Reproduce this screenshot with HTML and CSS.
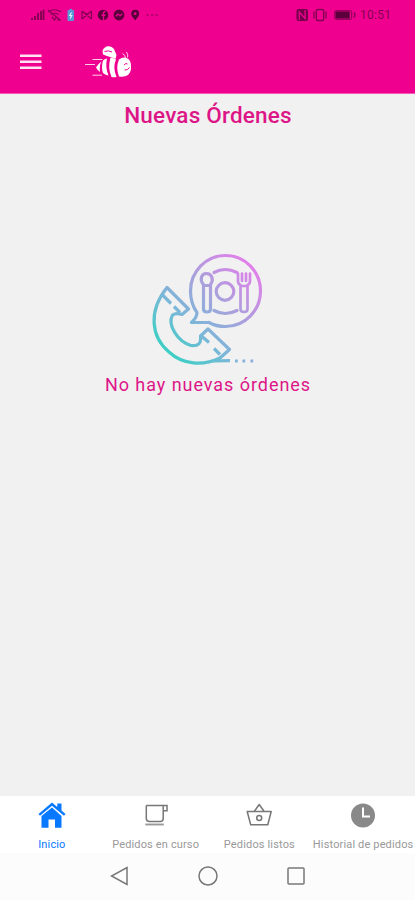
FILE: index.html
```html
<!DOCTYPE html>
<html lang="es">
<head>
<meta charset="utf-8">
<meta name="viewport" content="width=device-width, initial-scale=1">
<title>Nuevas Órdenes</title>
<link rel="stylesheet" href="styles.css">
</head>
<body>
<div class="screen">
  <header class="header">
    <div class="status">
      <svg class="status-left" width="130" height="16" viewBox="30 7 130 16" fill="none" stroke="#850052" stroke-width="1.2">
        <path d="M32 20v-2M35 20v-4M38 20v-7M41 20v-9M43.500 20V9.500" stroke-width="1.900"/>
        <path d="M48 12q6-4.500 13 0M50.500 14.500q4-2.500 8 0M48 10l12 10M52 17l2.500 3 2-3M57 20h4"/>
        <rect x="67.500" y="10" width="6.500" height="11" rx="1" fill="#5798d5" stroke="none"/>
        <path d="M69.500 9.500h2.500" stroke="#5798d5"/>
        <path d="M71.500 12.500l-1.800 3h2l-1.500 3" stroke="#d7f3ff"/>
        <path d="M82 11l9.500 8M91.500 11l-9.500 8M82 11v8M91.500 11v8M84 12.500q3 3 5.500 0"/>
        <circle cx="103" cy="15" r="5.300" fill="#5b003d" stroke="none"/>
        <path d="M103.500 20.500v-7q0-2 2-2M101.500 15.200h4" stroke="#ee008e" stroke-width="1.400"/>
        <circle cx="119" cy="15" r="5.400" fill="#5b003d" stroke="none"/>
        <path d="M115.800 16.300l2.200-2.200 2 1.600 2.400-1.900" stroke="#ee008e" stroke-width="1.300"/>
        <path d="M135.200 20.500c-1-2-4-4-4-6.800a4 4 0 0 1 8 0c0 2.800-3 4.800-4 6.800z" fill="#5b003d" stroke="none"/>
        <circle cx="135.200" cy="13.700" r="1.400" fill="#ee008e" stroke="none"/>
        <path d="M146.500 15h2.500M151 15h2.500M155.500 15h2.500"/>
      </svg>
      <svg class="status-right" width="62" height="16" viewBox="295 7 62 16" fill="none" stroke="#850052">
        <rect x="296.500" y="9" width="11.500" height="12" rx="2" fill="#75004a" stroke="none"/>
        <path d="M299.300 20v-8l5.800 6.500V10" stroke="#ee008e" stroke-width="1.300"/>
        <rect x="316.300" y="9.500" width="7.400" height="11" rx="1.500" stroke-width="1.400"/>
        <path d="M314 11.500v7M326 11.500v7" stroke-width="1.300"/>
        <rect x="334.700" y="10.700" width="17" height="8.600" rx="1.500" stroke-width="1"/>
        <rect x="335.500" y="11.500" width="14.200" height="7" fill="#5b003d" stroke="none"/>
        <path d="M354 12.500q2 2.500 0 5" stroke-width="1.300"/>
      </svg>
      <span class="time">10:51</span>
    </div>
    <div class="appbar">
      <svg class="menu" width="22" height="16" viewBox="0 0 22 16" fill="#ffe1f3"><path d="M0 .500h21.500v2.400H0zM0 6.500h21.500v2.400H0zM0 12.500h21.500v2.400H0z"/></svg>
      <svg class="bee" width="50" height="36" viewBox="83 44 50 36">
        <g fill="#fff">
          <path d="M103 53c-1.500-3 1-5 3.500-6.500 3-1 6 .5 7.500 2.500l2.500 6-1 4c-4-2-8.500-2.500-11-4-2-.8-2-1-1.500-2z"/>
          <path d="M101.500 61.500q-3.500 2.500-5.500 6 1.300 2.500 4 4.500-1-6 1.500-10.500z"/>
          <path d="M107 58.500q-2.500.5-4 2-2 7 0 12.500 2.500 2 5.500 2.500-3.500-8-1.500-17z"/>
          <path d="M110.500 57.500q3 .5 5.500 2-3.500 8 .5 17.500-2.500.5-5 0-4-9-1-19.500z"/>
          <path d="M119 59.500q4-3 7.500-1.500 4.500 1.500 4.500 8 .5 6-3 9-3.500 2.500-9 1.500-3.500-9 0-17z"/>
        </g>
        <path d="M125.500 58q-.2-3.300-3-4.300M127.500 57.500q1-2.500-1-5.500M96 59.500h-3.500M102.500 59.500h-9M95 64.500H85M102 75.200h-9.500" fill="none" stroke="#ffd0ec"/>
        <path d="M104.500 51.500q4-1.500 7.500.5M124 65q2-2.500 3.500-1M124.500 70q3 .5 5-2.500" fill="none" stroke="#f0008f"/>
      </svg>
    </div>
  </header>

  <main class="content">
    <h1 class="title">Nuevas Órdenes</h1>
    <svg class="art" width="140" height="130" viewBox="0 0 140 130" fill="none" stroke="url(#fade)" stroke-width="3.200" stroke-linecap="round" stroke-linejoin="round">
      <defs>
        <linearGradient id="fade" gradientUnits="userSpaceOnUse" x1="34" y1="116" x2="119" y2="27">
          <stop offset="0" stop-color="#3dcfc5"/>
          <stop offset=".3" stop-color="#7ab7d8"/>
          <stop offset=".62" stop-color="#ac9fdd"/>
          <stop offset="1" stop-color="#e57deb"/>
        </linearGradient>
      </defs>
      <path d="M70 81.500H52.500Q58 76.500 58 71.500C54 66 51.500 58 51.500 50A35 35.500 0 1 1 86.500 85.500Q77 85.500 70 81.500"/>
      <circle cx="86" cy="50.500" r="8.800"/>
      <path d="M75 31.500Q86 25.500 98 31.500M75 69.500Q86 75.500 98 69.500"/>
      <path d="M64.500 43.500C60.500 39 62 32.500 67.500 32.500S75 39 71.500 43.500V68q0 3-3.500 3t-3.500-3zM64.500 44.500h7"/>
      <path d="M99 32.500V40q0 3 2.500 4V68q0 3 3.500 3t3.500-3V44q2.500-1 2.500-4v-7.500M103 32.500V40M107 32.500V40M101.500 45h7" stroke-width="2.700"/>
      <path d="M28 46.500L49.500 68 43 73.500Q37 71.500 33.500 74C28 84 39 101 52 104.500Q63 106 61.500 95L69 88 90.500 108.500 81 117C64 125 44 124 30 111C12 96 9 70 28 46.500Z"/>
      <path d="M23 53.500l9 9M35 65.500l6 6M63 95.500l7 6M75 107.500l6 6" stroke-linecap="butt"/>
      <path d="M73 120L91 119.700" stroke-linecap="butt"/>
      <path d="M96 120h2.700M103.500 120h2.700M111.500 120h2.700" stroke-linecap="butt"/>
    </svg>
    <p class="message">No hay nuevas órdenes</p>
  </main>

  <nav class="tabs">
    <a class="tab tab-home active">
      <svg width="28" height="28" viewBox="0 0 28 28" fill="#0879ff"><path d="M14 .500L.500 12l1.500 1.700L14 3.800l12 9.900 1.500-1.700-4-3.500V1.500h-4.200V5z"/><path d="M14 5.500L3.500 14V25.800h7V17.500h6.500v8.300h6.500V14z"/></svg>
      <span>Inicio</span>
    </a>
    <a class="tab tab-progress">
      <svg width="28" height="28" viewBox="0 0 28 28" fill="none" stroke="#777" stroke-width="1.500"><path d="M4.300 3.500H25v5.200h-3.800M21.200 3.500v13q0 3-3 3H7.500q-3.200 0-3.200-3V3.500"/><path d="M3.300 22.500h18.500" stroke-width="1.900" stroke="#999"/></svg>
      <span>Pedidos en curso</span>
    </a>
    <a class="tab tab-ready">
      <svg width="28" height="28" viewBox="0 0 28 28" fill="none" stroke="#777" stroke-width="1.500" stroke-linejoin="round"><path d="M2.200 9.500h24l-3.400 13.300H5.700zM9.200 9.500L14.200 2.500l5 7"/><circle cx="14.200" cy="16" r="2.500"/></svg>
      <span>Pedidos listos</span>
    </a>
    <a class="tab tab-history">
      <svg width="28" height="28" viewBox="0 0 28 28"><circle cx="14" cy="13.500" r="12" fill="#898989"/><path d="M14 5.500v9h7" fill="none" stroke="#fff" stroke-width="2"/></svg>
      <span>Historial de pedidos</span>
    </a>
  </nav>
  <div class="system">
    <svg width="20" height="20" viewBox="0 0 20 20"><path d="M17 1.500v17L1.500 10z"/></svg>
    <svg width="20" height="20" viewBox="0 0 20 20"><circle cx="10" cy="10" r="9"/></svg>
    <svg width="20" height="20" viewBox="0 0 20 20"><rect x="2" y="2" width="16" height="16" rx="1"/></svg>
  </div>
</div>
</body>
</html>
```
FILE: styles.css
```css
* { box-sizing: border-box; }
body { margin: 0; font-family: Roboto, sans-serif; }
svg { display: block; flex: none; }
.screen {
  display: flex;
  flex-direction: column;
  width: 415px;
  height: 900px;
  background: #f1f1f1;
  overflow: hidden;
}
.header { height: 94px; background: #f0008f; border-bottom: 1px solid #f557b5; }
.status { display: flex; align-items: center; height: 30px; padding: 0 23px 0 30px; }
.status-right { margin-left: auto; }
.time {
  width: 32px;
  margin-left: 3px;
  color: #850052;
  font-size: 12px;
  line-height: 16px;
  letter-spacing: .3px;
  white-space: nowrap;
}
.appbar { display: flex; align-items: center; gap: 41px; height: 63px; padding-left: 20px; }
.content { display: flex; flex: 1; flex-direction: column; align-items: center; padding-left: 1px; }
.title {
  margin: 7px 0 0;
  color: #dd1688;
  font-size: 22.5px;
  font-weight: 500;
  line-height: 28px;
  letter-spacing: .2px;
  white-space: nowrap;
}
.art { margin: 112px 0 0 2px; }
.message {
  margin: 0;
  color: #dd1688;
  font-size: 18px;
  line-height: 27px;
  letter-spacing: .95px;
  white-space: nowrap;
}
.tabs {
  display: grid;
  grid-template-columns: repeat(4, 1fr);
  height: 57px;
  background: #fff;
}
.tab {
  display: flex;
  flex-direction: column;
  align-items: center;
  gap: 8px;
  min-width: 0;
  padding-top: 6px;
  color: #999;
  font-size: 11px;
  line-height: 14px;
  letter-spacing: .15px;
  white-space: nowrap;
}
.active { color: #0879ff; }
.system {
  display: flex;
  justify-content: center;
  gap: 68px;
  height: 47px;
  padding-top: 13px;
  background: #fcfcfc;
}
.system svg { fill: none; stroke: #777; stroke-width: 1.5; }
```
